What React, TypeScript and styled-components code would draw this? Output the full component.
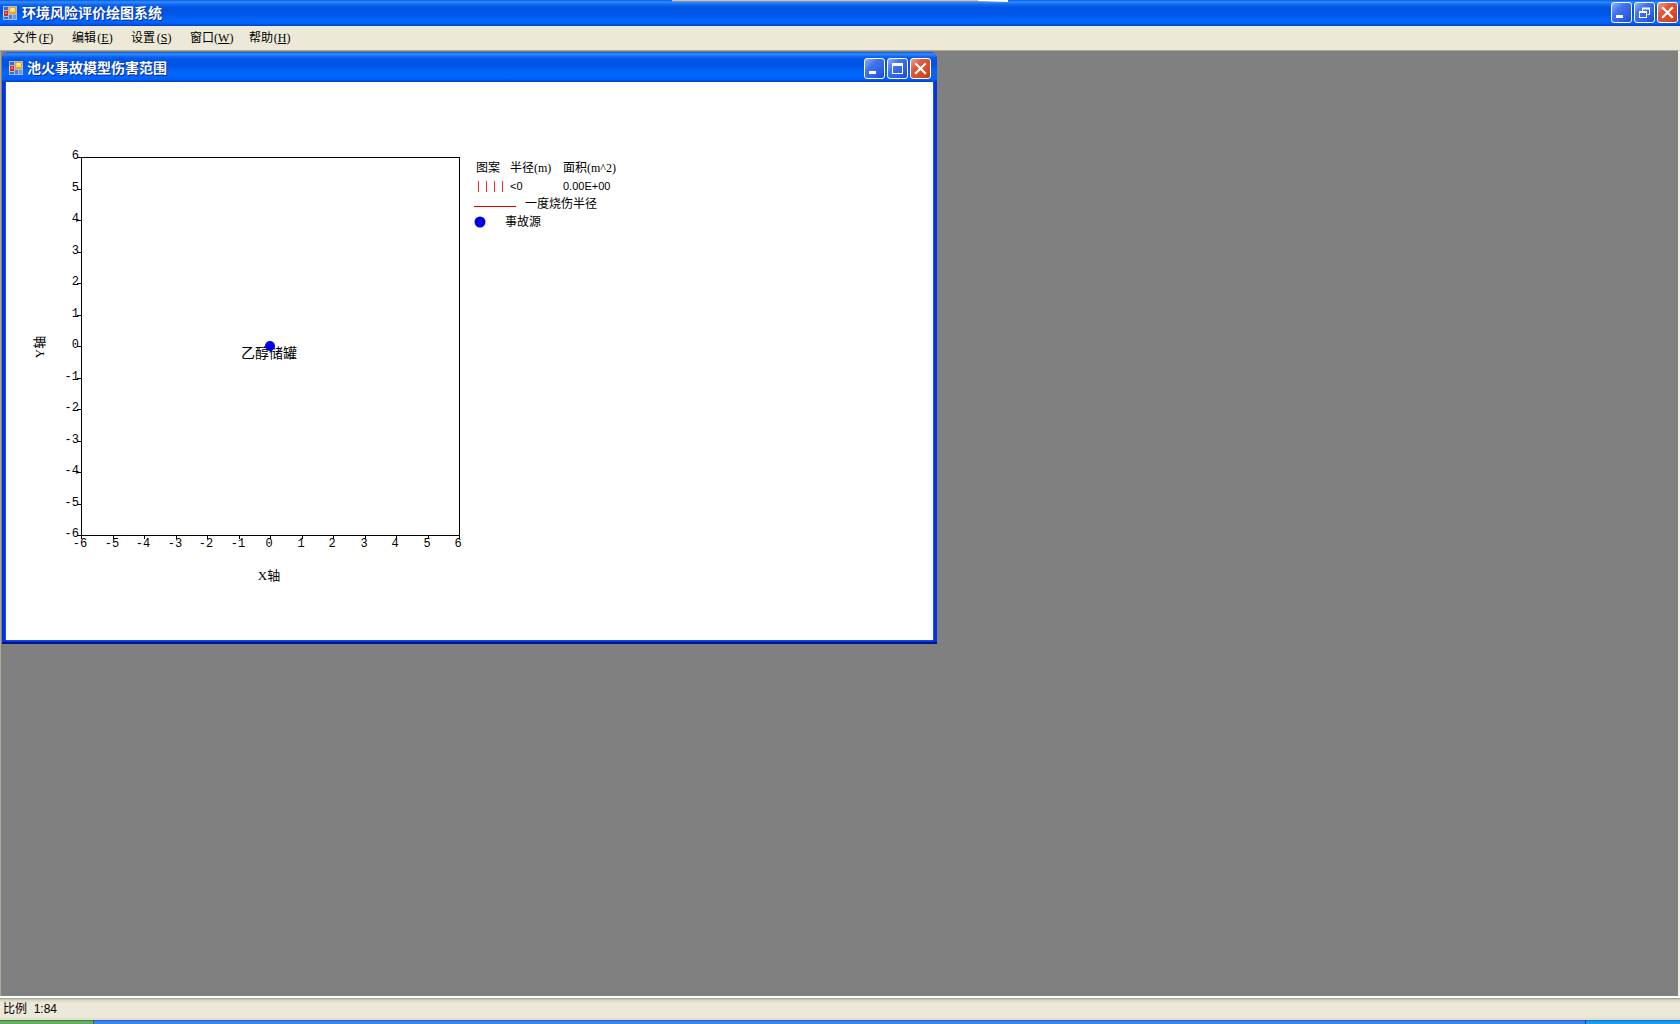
import React from "react";
import styled, { createGlobalStyle, css } from "styled-components";

const GlobalStyle = createGlobalStyle`
  * { box-sizing: border-box; }
  html, body { margin: 0; padding: 0; }
  body {
    background: #ece9d8;
    color: #000;
    font: 12px/18px "Liberation Serif", "Noto Sans CJK SC", serif;
  }
`;

const titleGradient = css`
  background: linear-gradient(
    to bottom,
    #0a5ae0 0,
    #2f8eff 2px,
    #0d62ee 5px,
    #0054e3 8px,
    #0055e9 14px,
    #0266fc 20px,
    #0061fc calc(100% - 3px),
    #0040c8 100%
  );
`;

const Screen = styled.div`
  position: relative;
  display: flex;
  flex-direction: column;
  min-height: 100vh;
`;

const TitleBar = styled.header<{ $child?: boolean }>`
  ${titleGradient}
  display: flex;
  align-items: center;
  gap: ${(p) => (p.$child ? 4 : 5)}px;
  height: ${(p) => (p.$child ? 30 : 26)}px;
  padding: ${(p) => (p.$child ? "2px 6px 0 7px" : "0 2px 1px 3px")};
  border-radius: ${(p) => (p.$child ? "7px 7px 0 0" : "0")};
`;

const Title = styled.h1`
  flex: 1;
  margin: 0;
  padding-bottom: 2px;
  color: #fff;
  font: bold 14px/20px "Noto Sans CJK SC", sans-serif;
  text-shadow: 1px 1px 0 #0a2a8c;
`;

const Buttons = styled.div`
  display: flex;
  gap: 2px;
`;

const WindowButton = styled.button<{ $close?: boolean }>`
  display: block;
  width: 21px;
  height: 21px;
  padding: 0;
  border: 1px solid #fff;
  border-radius: 3px;
  background: ${(p) =>
    p.$close
      ? "linear-gradient(135deg, #f0a088 0, #e0583a 35%, #d64a22 75%, #b83a18 100%)"
      : "linear-gradient(135deg, #8fb0fa 0, #4274ee 35%, #2a5ee6 75%, #1c48c8 100%)"};
  svg { display: block; }
`;

const MenuBar = styled.nav`
  display: flex;
  height: 24px;
  padding: 0 4px;
  background: #ece9d8;
`;

const MenuButton = styled.button`
  display: flex;
  align-items: center;
  padding: 0 8px 0 9px;
  border: 0;
  background: none;
  color: #000;
  font: 12px/18px "Liberation Serif", "Noto Sans CJK SC", serif;
`;

const Mnemonic = styled.span`
  width: 18px;
  text-align: center;
`;

const Workspace = styled.main`
  flex: 1;
  padding: 1px 1px 16px;
  background: #808080;
  border: solid #aca899;
  border-width: 1px 0 0 1px;
  border-right: 2px solid #f1efe2;
`;

const ChildWindow = styled.section`
  width: 56%;
  max-width: 935px;
  min-width: 660px;
  border-radius: 7px 7px 0 0;
  background: #0831d9;
`;

const Client = styled.div`
  display: flex;
  align-items: flex-start;
  margin: 0 4px;
  background: #fff;
  box-shadow: -1px 0 0 #0a5cf0, 1px 0 0 #0a5cf0, 0 1px 0 #1450dc;
`;

const WindowFoot = styled.div`
  height: 4px;
  border-bottom: 2px solid #00138c;
`;

const Chart = styled.svg`
  display: block;
  flex: none;
  .tick {
    font: 12px "Liberation Mono", monospace;
  }
  .caption {
    font: 13px "Liberation Serif", "Noto Sans CJK SC", serif;
  }
  .source {
    font: 14px "Noto Sans CJK SC", sans-serif;
  }
`;

const Legend = styled.div`
  padding: 77px 0 0 8px;
`;

const LegendTable = styled.table`
  border-collapse: collapse;
  th, td {
    height: 18px;
    padding: 0;
    font-weight: normal;
    line-height: 18px;
    text-align: left;
    white-space: nowrap;
  }
  th:first-child, td:first-child { width: 36px; padding-left: 2px; }
  th:nth-child(2), td:nth-child(2) { width: 53px; }
  svg { display: block; }
`;

const LegendNumber = styled.span`
  font: 11px/18px "Liberation Sans", sans-serif;
`;

const LegendItem = styled.div<{ $gap: number }>`
  display: flex;
  align-items: center;
  gap: ${(p) => p.$gap}px;
  height: 18px;
`;

const StatusBar = styled.footer`
  display: flex;
  align-items: center;
  height: 24px;
  padding: 0 3px;
  border-top: 2px solid #fff;
  background: linear-gradient(to bottom, #9d9a8b 0, #d8d5c4 2px, #ece9d8 5px, #ece9d8 19px, #dcd9c8 100%);
  font-family: "Liberation Sans", "Noto Sans CJK SC", sans-serif;
`;

const TaskBar = styled.div`
  display: flex;
  height: 4px;
  background: linear-gradient(to bottom, #2157c4 0, #3f8cf3 2px, #3a80ea 100%);
`;

const StartEdge = styled.div`
  width: 94px;
  border-right: 1px solid #2a7040;
  background: linear-gradient(to bottom, #2f7a34 0, #6fb56f 2px, #58a858 100%);
`;

const TrayEdge = styled.div`
  width: 95px;
  margin-left: auto;
  border-left: 1px solid #0a4a9c;
  background: linear-gradient(to bottom, #0f6cc0 0, #18a0f4 2px, #149ff0 100%);
`;

const DockedStrip = styled.div`
  position: absolute;
  top: 0;
  left: 40%;
  width: 20%;
  height: 2px;
  border-right: 30px solid #fff;
  border-bottom: 1px solid #7d8fa8;
  background: #b4c4d8;
`;

const FormIcon = () => (
  <svg width="14" height="14" viewBox="0 0 14 14" aria-hidden="true">
    <rect x="0" y="0" width="14" height="14" fill="#a9bce0" />
    <rect x="1" y="1" width="4" height="3" fill="#3a68d0" />
    <rect x="0" y="5" width="5" height="5" fill="#f4d8d0" />
    <rect x="1" y="5" width="4" height="5" fill="#c83020" />
    <rect x="2" y="6" width="2" height="2" fill="#f07858" />
    <rect x="6" y="1" width="7" height="7" fill="#e8a818" />
    <rect x="7" y="2" width="5" height="4" fill="#fbd860" />
    <rect x="8" y="2" width="3" height="2" fill="#fff0b0" />
    <rect x="1" y="11" width="4" height="2" fill="#3a68d0" />
    <rect x="6" y="9" width="3" height="4" fill="#4f7cd6" />
    <rect x="10" y="9" width="3" height="4" fill="#6f94e0" />
  </svg>
);

const Glyph = ({ kind }: { kind: string }) => (
  <svg width="19" height="19" viewBox="0 0 19 19" fill="none" stroke="#fff" aria-hidden="true">
    {kind === "min" && <rect x="4" y="12" width="7" height="3" fill="#fff" stroke="none" />}
    {kind === "max" && (
      <>
        <rect x="4.500" y="4.500" width="10" height="10" />
        <path d="M4 5.500h11" strokeWidth="3" />
      </>
    )}
    {kind === "restore" && (
      <>
        <path d="M7 5.500h8" strokeWidth="2" />
        <path d="M7.500 5v3M14.500 5v6.500h-2" />
        <rect x="4.500" y="8.500" width="7" height="6" />
        <path d="M4 9h8" strokeWidth="2" />
      </>
    )}
    {kind === "close" && <path d="M5 5l9 9M14 5l-9 9" strokeWidth="2.200" strokeLinecap="square" />}
  </svg>
);

const WindowButtons = ({ middle }: { middle: "max" | "restore" }) => (
  <Buttons>
    <WindowButton aria-label="最小化"><Glyph kind="min" /></WindowButton>
    <WindowButton aria-label={middle === "max" ? "最大化" : "还原"}><Glyph kind={middle} /></WindowButton>
    <WindowButton $close aria-label="关闭"><Glyph kind="close" /></WindowButton>
  </Buttons>
);

const menus = [
  ["文件", "F"],
  ["编辑", "E"],
  ["设置", "S"],
  ["窗口", "W"],
  ["帮助", "H"],
];

const EDGE = 75;
const SIZE = 378;
const values = Array.from({ length: 13 }, (_, i) => i - 6);
const toX = (v: number) => EDGE + Math.round(((v + 6) * SIZE) / 12);
const toY = (v: number) => EDGE + Math.round(((6 - v) * SIZE) / 12);

const Plot = () => (
  <Chart width="460" height="558" viewBox="0 0 460 558">
    <g shapeRendering="crispEdges" stroke="#000" fill="none">
      <rect x={EDGE + 0.5} y={EDGE + 0.5} width={SIZE} height={SIZE} />
      {values.map((v) => (
        <path key={v} d={`M${EDGE - 4} ${toY(v) + 0.5}h4M${toX(v) + 0.5} ${EDGE + SIZE}v4`} />
      ))}
    </g>
    {values.map((v) => (
      <React.Fragment key={v}>
        <text className="tick" x={EDGE - 2} y={toY(v) + 2} textAnchor="end">{v}</text>
        <text className="tick" x={toX(v) - 1} y={EDGE + SIZE + 12} textAnchor="middle">{v}</text>
      </React.Fragment>
    ))}
    <text className="caption" x={toX(0) - 1} y="498" textAnchor="middle">X轴</text>
    <text className="caption" textAnchor="middle" transform="translate(38 265) rotate(-90)">Y轴</text>
    <text className="source" x={toX(0) - 1} y="276" textAnchor="middle">乙醇储罐</text>
    <circle cx={toX(0)} cy={toY(0)} r="5" fill="#0000e6" />
  </Chart>
);

export default function App() {
  return (
    <>
      <GlobalStyle />
      <Screen>
        <TitleBar>
          <FormIcon />
          <Title>环境风险评价绘图系统</Title>
          <WindowButtons middle="restore" />
        </TitleBar>
        <DockedStrip />
        <MenuBar>
          {menus.map(([name, key]) => (
            <MenuButton key={key}>
              {name}
              <Mnemonic>(<u>{key}</u>)</Mnemonic>
            </MenuButton>
          ))}
        </MenuBar>
        <Workspace>
          <ChildWindow>
            <TitleBar $child>
              <FormIcon />
              <Title as="h2">池火事故模型伤害范围</Title>
              <WindowButtons middle="max" />
            </TitleBar>
            <Client>
              <Plot />
              <Legend>
                <LegendTable>
                  <thead>
                    <tr><th>图案</th><th>半径(m)</th><th>面积(m^2)</th></tr>
                  </thead>
                  <tbody>
                    <tr>
                      <td>
                        <svg width="28" height="12" viewBox="0 0 28 12" aria-hidden="true">
                          <path d="M2.500 1v11M10.500 1v11M18.500 1v11M26.500 1v11" stroke="#e03030" />
                        </svg>
                      </td>
                      <td><LegendNumber>&lt;0</LegendNumber></td>
                      <td><LegendNumber>0.00E+00</LegendNumber></td>
                    </tr>
                  </tbody>
                </LegendTable>
                <LegendItem $gap={9}>
                  <svg width="42" height="6" viewBox="0 0 42 6" aria-hidden="true">
                    <path d="M0 5.500h42" stroke="#e00000" />
                  </svg>
                  一度烧伤半径
                </LegendItem>
                <LegendItem $gap={19}>
                  <svg width="12" height="12" viewBox="0 0 12 12" aria-hidden="true">
                    <circle cx="6" cy="6" r="5.500" fill="#0000e6" />
                  </svg>
                  事故源
                </LegendItem>
              </Legend>
            </Client>
            <WindowFoot />
          </ChildWindow>
        </Workspace>
        <StatusBar>比例&nbsp; 1:84</StatusBar>
        <TaskBar>
          <StartEdge />
          <TrayEdge />
        </TaskBar>
      </Screen>
    </>
  );
}
